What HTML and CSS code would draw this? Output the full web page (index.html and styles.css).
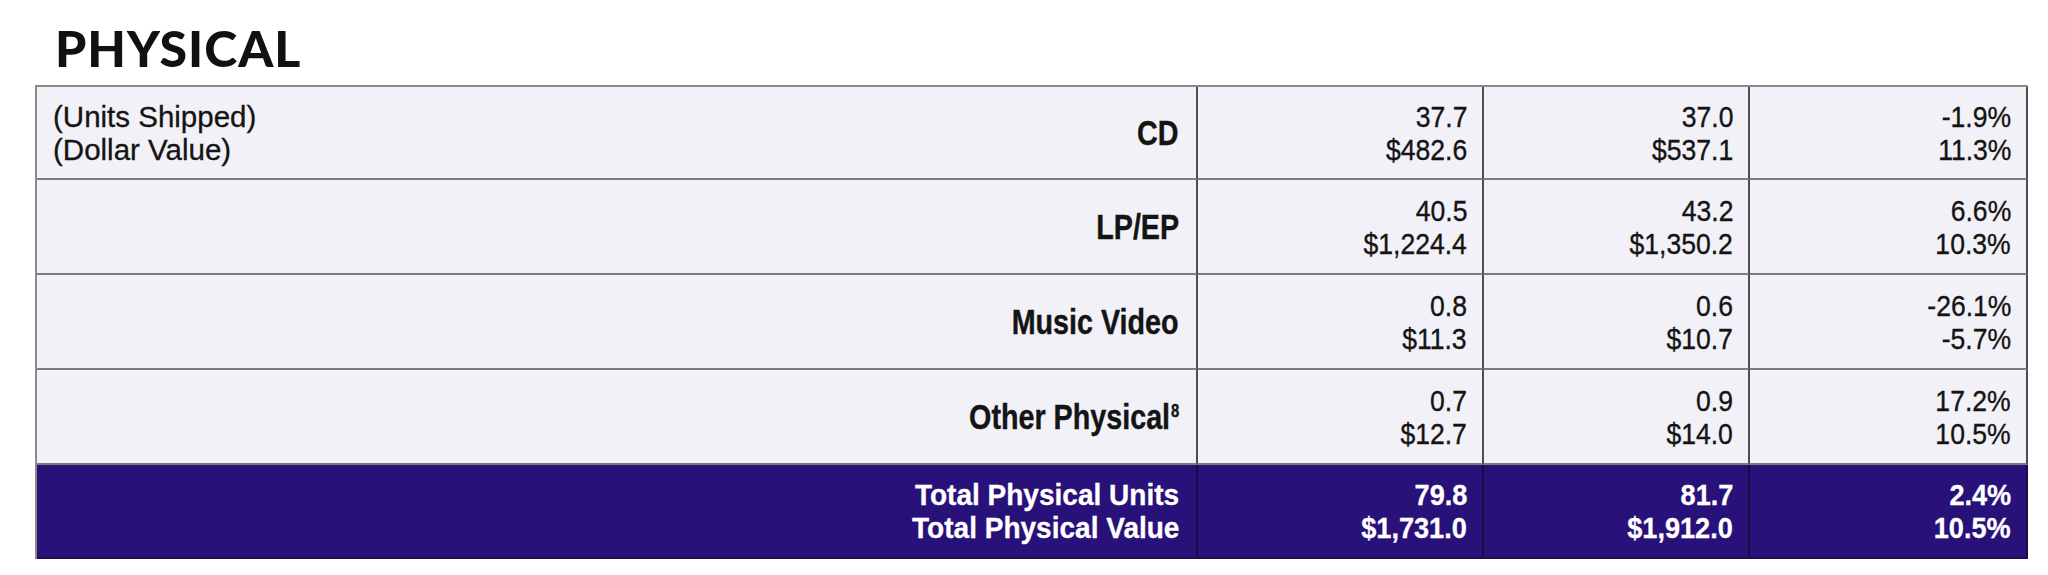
FILE: index.html
```html
<!DOCTYPE html>
<html lang="en">
<head>
<meta charset="utf-8">
<title>Physical</title>
<link rel="stylesheet" href="styles.css">
</head>
<body>
<div class="page">
  <h1 class="title">PHYSICAL</h1>
  <div class="grid">
    <div class="cell label-cell">
      <div class="legend"><span>(Units Shipped)</span><span>(Dollar Value)</span></div>
      <div class="label"><span>CD</span></div>
    </div>
    <div class="cell num"><span>37.7</span><span>$482.6</span></div>
    <div class="cell num"><span>37.0</span><span>$537.1</span></div>
    <div class="cell num"><span>-1.9%</span><span>11.3%</span></div>

    <div class="cell label-cell"><div class="label"><span>LP/EP</span></div></div>
    <div class="cell num"><span>40.5</span><span>$1,224.4</span></div>
    <div class="cell num"><span>43.2</span><span>$1,350.2</span></div>
    <div class="cell num"><span>6.6%</span><span>10.3%</span></div>

    <div class="cell label-cell"><div class="label"><span>Music Video</span></div></div>
    <div class="cell num"><span>0.8</span><span>$11.3</span></div>
    <div class="cell num"><span>0.6</span><span>$10.7</span></div>
    <div class="cell num"><span>-26.1%</span><span>-5.7%</span></div>

    <div class="cell label-cell"><div class="label"><span>Other Physical</span><sup class="fn">8</sup></div></div>
    <div class="cell num"><span>0.7</span><span>$12.7</span></div>
    <div class="cell num"><span>0.9</span><span>$14.0</span></div>
    <div class="cell num"><span>17.2%</span><span>10.5%</span></div>

    <div class="cell total total-label"><span>Total Physical Units</span><span>Total Physical Value</span></div>
    <div class="cell total num"><span>79.8</span><span>$1,731.0</span></div>
    <div class="cell total num"><span>81.7</span><span>$1,912.0</span></div>
    <div class="cell total num"><span>2.4%</span><span>10.5%</span></div>
  </div>
</div>
</body>
</html>
```

FILE: styles.css
```css
* { box-sizing: border-box; }
html, body { margin: 0; padding: 0; background: #ffffff; }
.page { padding: 0 0 0 35px; }
.title {
  margin: 0 0 7px 20px;
  padding-top: 18px;
  font-family: "Lato", "Liberation Sans", sans-serif;
  font-weight: 900;
  font-size: 50px;
  line-height: 60px;
  letter-spacing: 1px;
  color: #111111;
}
.grid {
  display: grid;
  grid-template-columns: 1161px 286px 266px 278px;
  grid-template-rows: 93px 95px 95px 95px 94px;
  width: 1993px;
  border-top: 2px solid #8a8a8a;
  border-left: 2px solid #8a8a8a;
  font-family: "Liberation Sans", Arial, sans-serif;
  color: #141414;
}
.cell {
  background: #f2f1f7;
  border-right: 2px solid #4d4d4d;
  border-bottom: 2px solid #7c7c7c;
}
.label-cell {
  display: flex;
  align-items: center;
  justify-content: space-between;
  padding: 0 17px 0 16px;
}
.legend {
  display: flex;
  flex-direction: column;
  font-size: 29.5px;
  line-height: 33px;
  -webkit-text-stroke: 0.3px #141414;
}
.legend span {
  display: block;
  white-space: nowrap;
}
.label {
  margin-left: auto;
  display: flex;
  align-items: flex-start;
  font-weight: 700;
  font-size: 35px;
  line-height: 40px;
  transform: scaleX(0.82);
  transform-origin: right center;
  white-space: nowrap;
  -webkit-text-stroke: 0.4px #141414;
}
.label .fn {
  display: block;
  font-size: 18px;
  line-height: 20px;
  margin: 4px 0 0 1px;
}
.num {
  display: flex;
  flex-direction: column;
  align-items: flex-end;
  justify-content: center;
  padding: 0 15px 0 8px;
  font-size: 29.5px;
  line-height: 33px;
  -webkit-text-stroke: 0.35px #141414;
}
.num span,
.total-label span {
  display: block;
  white-space: nowrap;
  transform-origin: right center;
}
.num span { transform: scaleX(0.9); }
.total {
  background: #28127a;
  color: #ffffff;
  border-right: 2px solid #1a0b48;
  border-bottom: 2px solid #1e0d50;
  font-weight: 700;
  -webkit-text-stroke: 0.3px #ffffff;
}
.total-label {
  display: flex;
  flex-direction: column;
  align-items: flex-end;
  justify-content: center;
  padding: 0 17px 0 16px;
  font-size: 29.5px;
  line-height: 33px;
}
.total-label span { transform: scaleX(0.95); }
.total.num span { transform: scaleX(0.92); }
```
